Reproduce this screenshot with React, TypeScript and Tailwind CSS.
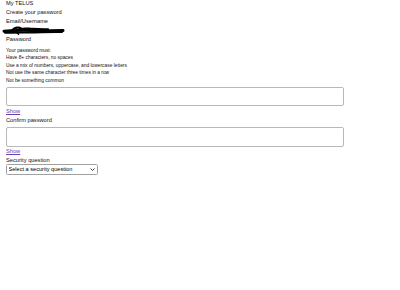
import React from 'react';

const labelCls = 'text-[5.7px] leading-[9px] text-[#111]';

function Redacted() {
  // 手書きの塗りつぶし (個人情報マスク)
  return (
    <svg width="64" height="9" viewBox="0 0 64 9" className="block">
      <path d="M2 5.2 C 10 4.4, 20 4, 30 4.4 S 50 4.8, 61 4.6" stroke="#000" strokeWidth="3" fill="none" strokeLinecap="round" />
      <path d="M3 6.8 C 14 6.4, 28 6.6, 40 6.2 S 54 5.8, 60 6" stroke="#000" strokeWidth="2" fill="none" strokeLinecap="round" />
      <path d="M11 3.6 C 13 1.4, 17 1, 19 2.4 C 21 3.6, 24 2, 28 2.6 C 33 3.2, 40 2.8, 46 3.4" stroke="#000" strokeWidth="2.2" fill="none" strokeLinecap="round" />
      <path d="M14 6 L 16.5 8.2" stroke="#000" strokeWidth="1.4" strokeLinecap="round" />
    </svg>
  );
}

function ShowLink() {
  return (
    <a href="#" className="block text-[5.7px] leading-[9px] text-[#6a3fb0] underline decoration-[0.5px]">
      Show
    </a>
  );
}

export default function App() {
  return (
    <div className="w-[400px] h-[290px] bg-white overflow-hidden font-['Liberation_Sans',Arial,sans-serif]">
      <div className="px-[6px] mt-[-1px]">
        <div className={labelCls}>My TELUS</div>
        <div className={labelCls}>Create your password</div>
        <div className={labelCls}>Email/Username</div>
        <div className="h-[9px] ml-[-4px] mt-[-0.5px]">
          <Redacted />
        </div>
        <div className={labelCls + ' mt-[0.5px]'}>Password</div>

        {/* パスワード要件 */}
        <ul className="mt-[3px] text-[4.85px] leading-[7.4px] text-[#111]">
          <li>Your password must:</li>
          <li>Have 8+ characters, no spaces</li>
          <li>Use a mix of numbers, uppercase, and lowercase letters</li>
          <li>Not use the same character three times in a row</li>
          <li>Not be something common</li>
        </ul>

        <input
          type="password"
          className="block mt-[2.7px] w-[338px] h-[19.5px] border border-[#b8b8b8] rounded-[2px] bg-white"
        />
        <div className="mt-[0.5px]">
          <ShowLink />
        </div>
        <div className="text-[5.7px] leading-[8px] text-[#111]">Confirm password</div>
        <input
          type="password"
          className="block mt-[3.5px] w-[338px] h-[19.5px] border border-[#b8b8b8] rounded-[2px] bg-white"
        />
        <ShowLink />
        <div className="text-[5.7px] leading-[8px] text-[#111]">Security question</div>
        <div className="relative mt-[0.5px] w-[92px] h-[10.5px]">
          <select
            defaultValue=""
            className="appearance-none block w-full h-full text-[5.6px] leading-[9px] border border-[#a0a0a0] rounded-[1.5px] bg-white text-black pl-[1.5px] pr-[8px]"
          >
            <option value="">Select a security question</option>
            <option value="pet">What was the name of your first pet?</option>
            <option value="city">In what city were you born?</option>
          </select>
          <svg
            width="5"
            height="3"
            viewBox="0 0 5 3"
            className="pointer-events-none absolute right-[3px] top-[4px]"
          >
            <path d="M0.5 0.5 L2.5 2.5 L4.5 0.5" stroke="#333" strokeWidth="0.9" fill="none" />
          </svg>
        </div>
      </div>
    </div>
  );
}
